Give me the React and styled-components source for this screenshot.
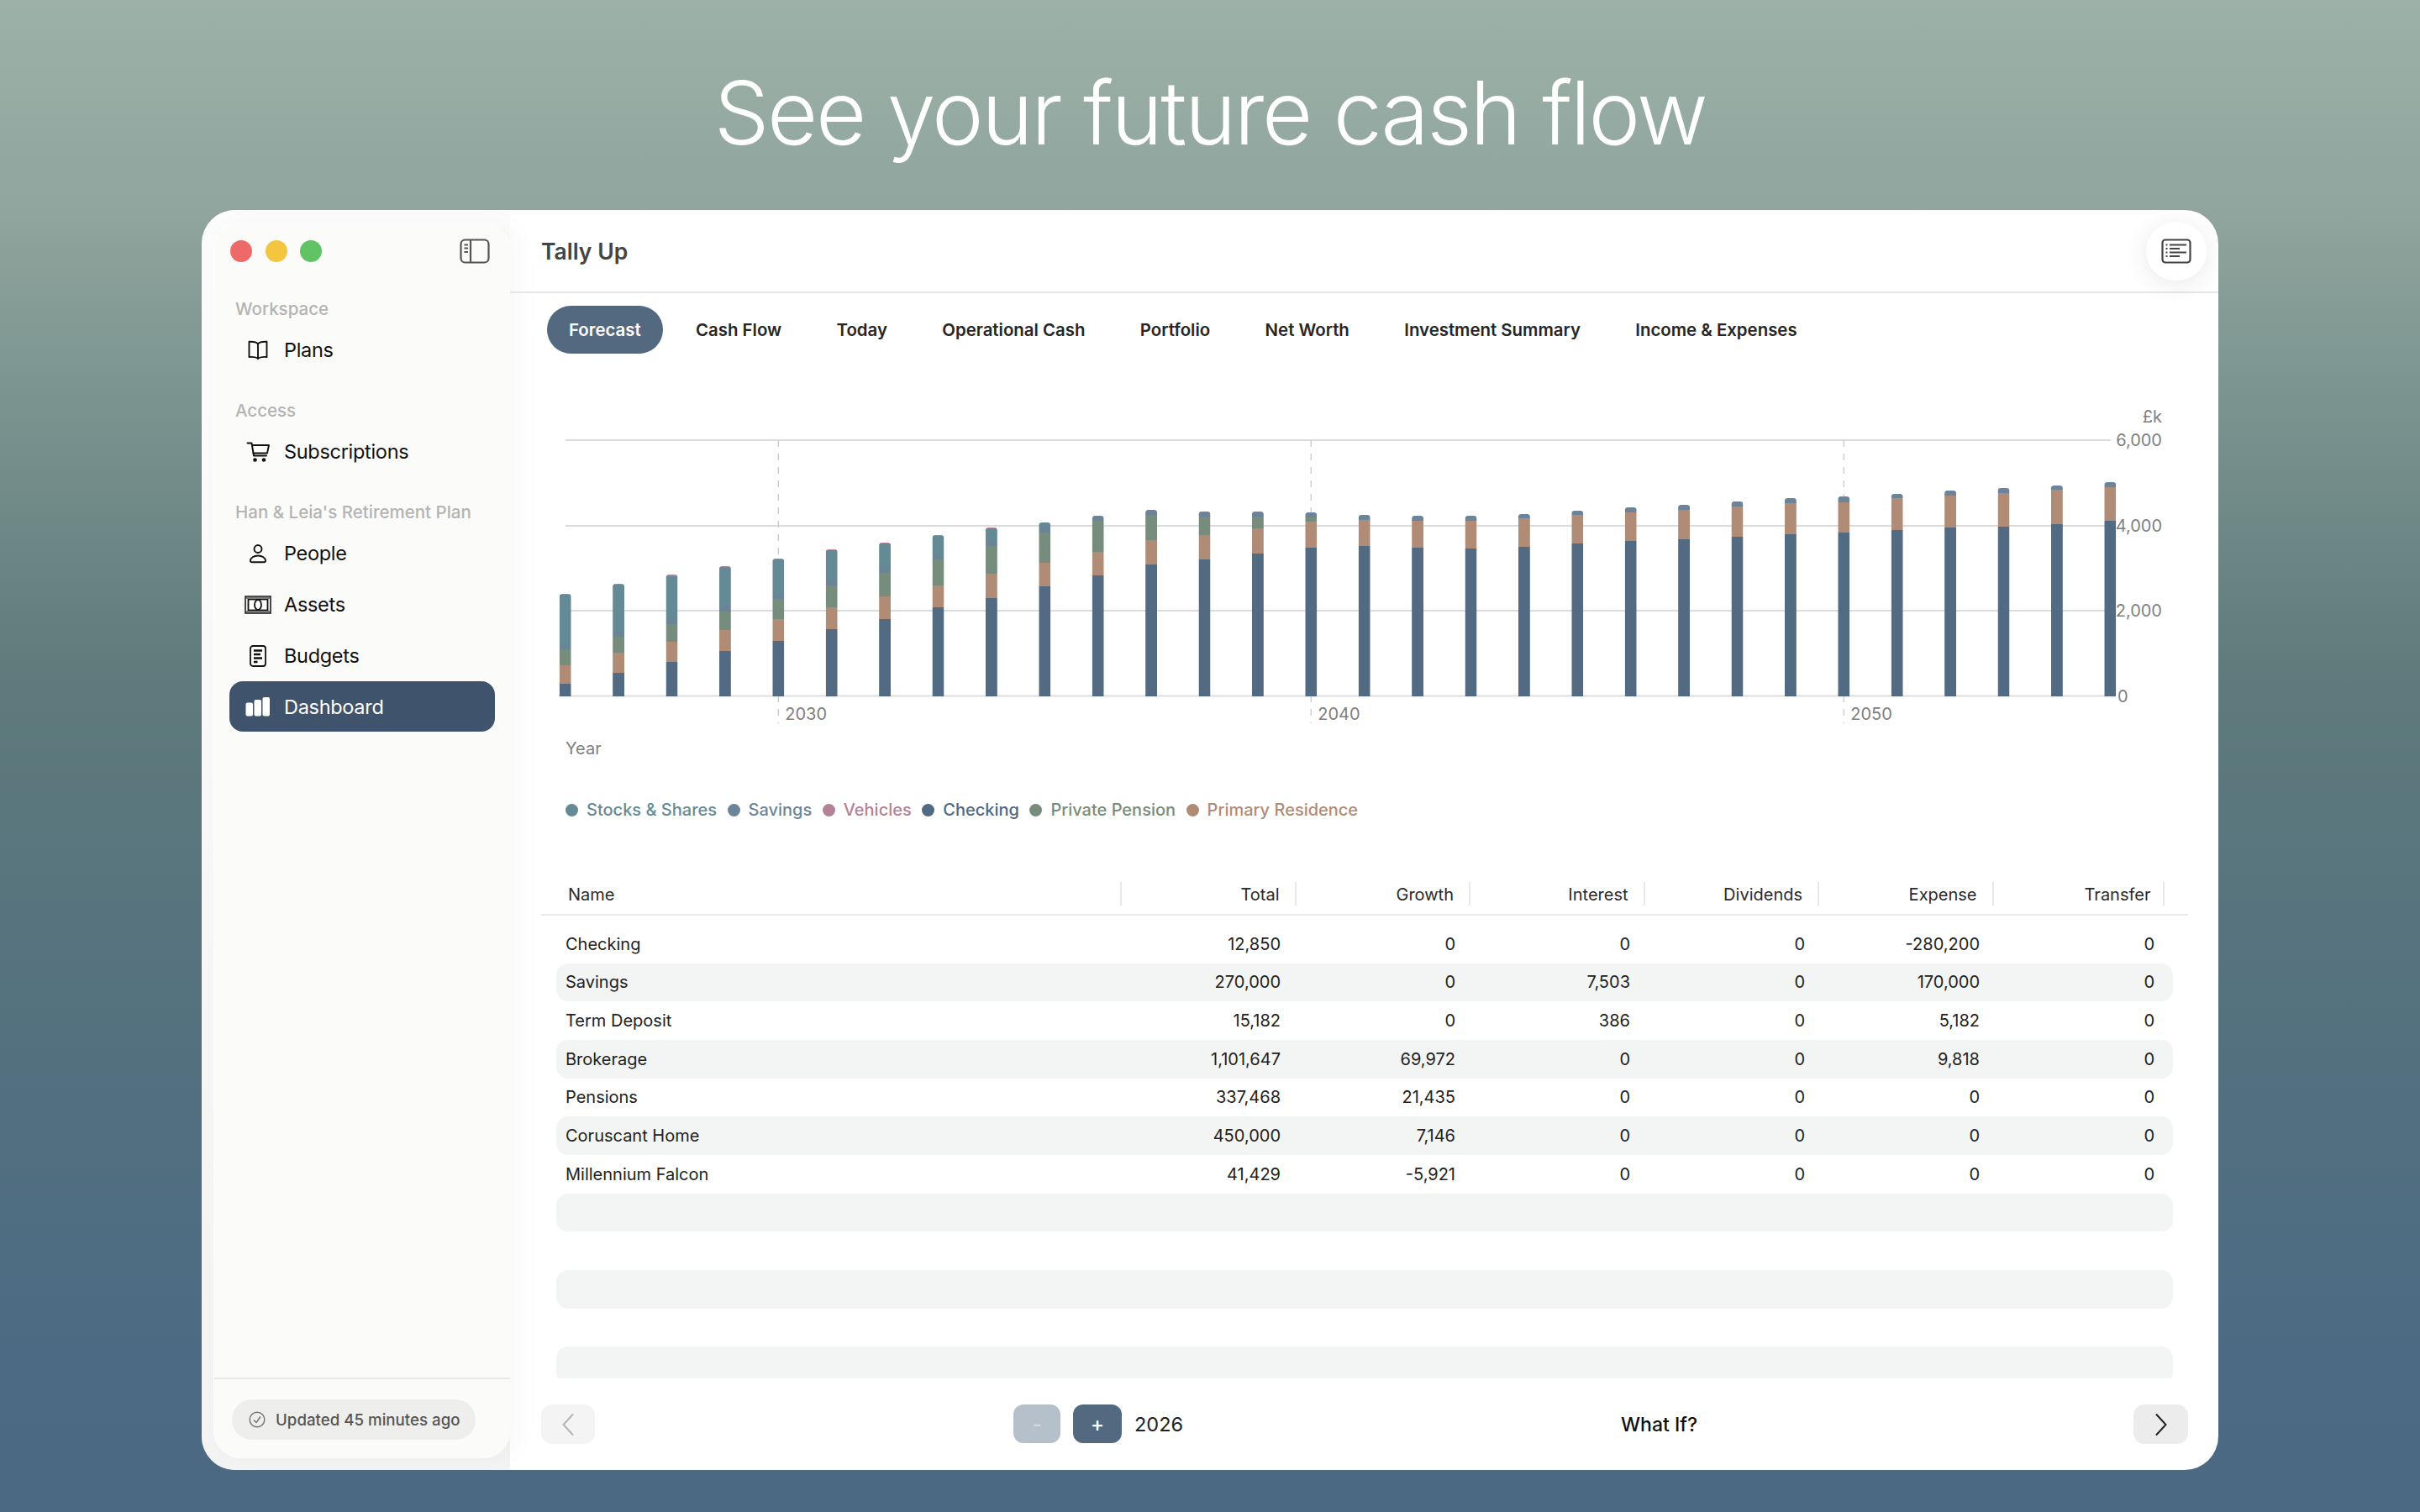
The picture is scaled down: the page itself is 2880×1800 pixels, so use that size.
import React from 'react'
import styled, { createGlobalStyle } from 'styled-components'

const GlobalStyle = createGlobalStyle`
  html, body {
    margin: 0;
    padding: 0;
  }
  body {
    width: 2880px;
    height: 1800px;
    overflow: hidden;
    font-family: Inter, 'Liberation Sans', sans-serif;
  }
`

const Page = styled.div`
  width: 2880px;
  height: 1800px;
  display: flex;
  flex-direction: column;
  align-items: center;
  background: linear-gradient(180deg, #9db1a8 0%, #8fa59d 14%, #5f7b7c 44%, #56737e 62%, #4c6a83 90%, #4b6982 100%);
`

const Headline = styled.h1`
  height: 250px;
  margin: 0;
  display: flex;
  align-items: center;
  padding-top: 18px;
  box-sizing: border-box;
  font-size: 104px;
  font-weight: 300;
  letter-spacing: -2.4px;
  color: #fff;
`

const Window = styled.div`
  width: 2400px;
  height: 1500px;
  display: flex;
  background: #fff;
  border-radius: 40px;
  overflow: hidden;
  box-shadow: inset 1px 0 1px rgba(90, 90, 90, 0.25);
`

const SidebarWell = styled.div`
  width: 367px;
  flex: none;
  padding: 15px 0 15px 15px;
  box-sizing: border-box;
  background: linear-gradient(180deg, #fcfcfc 0%, #f3f3f3 100%);
`

const Sidebar = styled.aside`
  height: 100%;
  display: flex;
  flex-direction: column;
  background: #fbfbfa;
  border-radius: 32px;
  box-shadow: 10px 0 30px rgba(0, 0, 0, 0.03), 0 0 0 1px #fff;
`

const SidebarTop = styled.div`
  height: 68px;
  display: flex;
  align-items: center;
  justify-content: space-between;
  padding: 0 24px 0 19px;
  flex: none;
`

const Lights = styled.div`
  display: flex;
  gap: 15.5px;
`

const Light = styled.span`
  width: 26px;
  height: 26px;
  border-radius: 50%;
  background: ${props => props.color};
`

const Nav = styled.nav`
  flex: 1;
  padding-top: 20px;
`

const Section = styled.div`
  margin-bottom: 28px;
`

const SectionLabel = styled.div`
  height: 28px;
  line-height: 29px;
  margin: 0 0 5px 25px;
  font-size: 20.5px;
  font-weight: 500;
  color: #b4b4b4;
  white-space: nowrap;
`

const NavItem = styled.div`
  height: 60px;
  margin: 0 18px 1px;
  padding: 1px 0 0 16px;
  box-sizing: border-box;
  display: flex;
  align-items: center;
  gap: 13px;
  border-radius: 16px;
  font-size: 23.5px;
  letter-spacing: -0.3px;
  color: ${props => (props.$active ? '#fff' : '#111')};
  background: ${props => (props.$active ? '#3f546c' : 'transparent')};
`

const NavIcon = styled.span`
  width: 36px;
  height: 36px;
  display: flex;
  align-items: center;
  justify-content: center;
  flex: none;
`

const SidebarFooter = styled.div`
  height: 95px;
  flex: none;
  padding: 24px 0 0 21px;
  box-sizing: border-box;
  border-top: 2px solid #e7e7e6;
`

const StatusPill = styled.div`
  width: 290px;
  height: 48px;
  padding-left: 20px;
  box-sizing: border-box;
  display: flex;
  align-items: center;
  gap: 12px;
  border-radius: 24px;
  background: #eeeeed;
  font-size: 18.7px;
  font-weight: 500;
  color: #555;
  white-space: nowrap;
`

const Main = styled.main`
  flex: 1;
  min-width: 0;
  display: flex;
  flex-direction: column;
`

const TopBar = styled.header`
  height: 99px;
  flex: none;
  box-sizing: border-box;
  padding: 0 14px 0 37px;
  display: flex;
  align-items: center;
  justify-content: space-between;
  border-bottom: 2px solid #e6e6e6;
`

const AppTitle = styled.div`
  font-size: 26.5px;
  font-weight: 600;
  color: #444;
  padding-top: 1px;
`

const RoundButton = styled.div`
  width: 72px;
  height: 70px;
  display: flex;
  align-items: center;
  justify-content: center;
  border-radius: 36px;
  background: #fff;
  box-shadow: 0 4px 30px rgba(0, 0, 0, 0.09);
`

const Tabs = styled.div`
  flex: none;
  display: flex;
  gap: 13.4px;
  margin: 15px 0 0 44px;
`

const Tab = styled.div`
  height: 57px;
  padding: 0 26px;
  display: flex;
  align-items: center;
  border-radius: 29px;
  font-size: 20.4px;
  font-weight: 600;
  color: ${props => (props.$active ? '#fff' : '#262626')};
  background: ${props => (props.$active ? '#52697f' : 'transparent')};
`

const ChartSvg = styled.svg`
  display: block;
  flex: none;
  margin-top: 52px;
  font-family: Inter, 'Liberation Sans', sans-serif;
`

const Legend = styled.div`
  flex: none;
  height: 28px;
  margin: 40px 0 0 66px;
  display: flex;
  align-items: center;
  gap: 12.5px;
`

const LegendItem = styled.div`
  display: flex;
  align-items: center;
  gap: 10px;
  font-size: 20px;
  font-weight: 500;
  color: ${props => props.color};
`

const Dot = styled.span`
  width: 15px;
  height: 15px;
  border-radius: 50%;
  background: ${props => props.color};
`

const TableWrap = styled.div`
  flex: 1;
  min-height: 0;
  overflow: hidden;
  margin: 72px 36px 0 37px;
`

const HeadRow = styled.div`
  height: 40px;
  box-sizing: border-box;
  display: flex;
  padding-bottom: 10px;
  border-bottom: 2px solid #e8e8e8;
  margin-bottom: 11px;
`

const HeadName = styled.div`
  width: 691px;
  flex: none;
  padding-left: 32px;
  box-sizing: border-box;
  font-size: 20px;
  line-height: 30px;
  color: #2a2a2a;
  border-right: 2px solid #e8e8e8;
`

const HeadCell = styled.div`
  width: ${props => props.$width || 207.5}px;
  flex: none;
  padding-right: ${props => props.$pad || 18}px;
  box-sizing: border-box;
  text-align: right;
  font-size: 20px;
  line-height: 30px;
  color: #2a2a2a;
  border-right: 2px solid #e8e8e8;
`

const Row = styled.div`
  height: 45.67px;
  width: 1924px;
  margin-left: 18px;
  padding: 0 22px 0 11px;
  box-sizing: border-box;
  display: flex;
  align-items: center;
  border-radius: 14px;
  font-size: 20px;
  color: #222;
  background: ${props => (props.$shaded ? '#f3f5f4' : 'transparent')};
`

const RowName = styled.div`
  flex: 1;
`

const RowCell = styled.div`
  width: 208px;
  flex: none;
  text-align: right;
`

const BottomBar = styled.footer`
  height: 109px;
  flex: none;
  box-sizing: border-box;
  padding: 31px 36px 0 37px;
  display: grid;
  grid-template-columns: 562px 723px 1fr 65px;
  align-items: start;
`

const NavButton = styled.div`
  width: ${props => props.$width}px;
  height: 47px;
  display: flex;
  align-items: center;
  justify-content: center;
  border-radius: 13px;
  background: ${props => props.$bg};
`

const Stepper = styled.div`
  display: flex;
  align-items: center;
  gap: 15px;
`

const StepButton = styled.div`
  width: ${props => props.$width}px;
  height: 46px;
  display: flex;
  align-items: center;
  justify-content: center;
  border-radius: 12px;
  font-size: 24px;
  font-weight: 500;
  color: ${props => (props.$muted ? '#d5dbe1' : '#fff')};
  background: ${props => (props.$muted ? '#b5c0cb' : '#52697f')};
`

const YearValue = styled.div`
  font-size: 23.5px;
  color: #222;
`

const WhatIf = styled.div`
  height: 47px;
  display: flex;
  align-items: center;
  font-size: 23px;
  font-weight: 500;
  color: #111;
`

const PALETTE = {
  checking: '#526a82',
  residence: '#b08c76',
  pension: '#768d7e',
  savings: '#6b8499',
  stocks: '#648b95',
  vehicles: '#b58295',
}

// cumulative pixel heights read off the picture: checking, residence, pension, savings, stocks, vehicles
const BARS = [
  [15, 37, 56, 61, 121, 122],
  [28, 52, 71, 77, 133, 134],
  [41, 65, 86, 92, 143, 145],
  [54, 79, 101, 107, 154, 155],
  [66, 92, 116, 122, 163, 164],
  [80, 106, 132, 138, 174, 175],
  [92, 119, 147, 153, 182, 183],
  [106, 132, 163, 170, 191, 192],
  [117, 146, 179, 185, 200, 201],
  [131, 159, 195, 201, 207, 207],
  [144, 172, 209, 215, 215, 215],
  [157, 186, 216, 222, 222, 222],
  [163, 192, 214, 220, 220, 220],
  [170, 200, 214, 220, 220, 220],
  [177, 208, 213, 219, 219, 219],
  [179, 210, 210, 216, 216, 216],
  [177, 209, 209, 215, 215, 215],
  [176, 209, 209, 215, 215, 215],
  [178, 212, 212, 217, 217, 217],
  [182, 216, 216, 221, 221, 221],
  [185, 219, 219, 225, 225, 225],
  [187, 222, 222, 228, 228, 228],
  [190, 226, 226, 232, 232, 232],
  [193, 230, 230, 236, 236, 236],
  [195, 231, 231, 238, 238, 238],
  [198, 236, 236, 241, 241, 241],
  [201, 239, 239, 245, 245, 245],
  [202, 242, 242, 248, 248, 248],
  [205, 246, 246, 251, 251, 251],
  [209, 249, 249, 255, 255, 255],
]

const SEGMENTS = ['checking', 'residence', 'pension', 'savings', 'stocks', 'vehicles']

// chart coordinates are relative to the svg, which starts at x=607 y=473 on the page
const CHART_W = 2033
const CHART_H = 437
const axisY = 355.5
const barBase = 356
const barX = i => 65.7 + i * 63.4
const BAR_W = 14

const Chart = () => {
  const grid = [
    { y: 51, label: '6,000' },
    { y: 153, label: '4,000' },
    { y: 254, label: '2,000' },
  ]
  const years = [
    { i: 4, label: '2030' },
    { i: 14, label: '2040' },
    { i: 24, label: '2050' },
  ]
  return (
    <ChartSvg width={CHART_W} height={CHART_H} viewBox={`0 0 ${CHART_W} ${CHART_H}`}>
      <defs>
        {BARS.map((bar, i) => (
          <clipPath key={i} id={`bar-${i}`}>
            <rect x={barX(i) - BAR_W / 2} y={barBase - bar[5]} width={BAR_W} height={bar[5] + 6} rx="3.5" />
          </clipPath>
        ))}
      </defs>
      {grid.map(g => (
        <g key={g.y}>
          <line x1="66" x2="1905" y1={g.y} y2={g.y} stroke="#dcdcdc" strokeWidth="2" />
          <text x="1966" y={g.y + 7} textAnchor="end" fontSize="20" fill="#808080">{g.label}</text>
        </g>
      ))}
      <line x1="58" x2="1911" y1={axisY} y2={axisY} stroke="#dedede" strokeWidth="2" />
      <text x="1966" y="30" textAnchor="end" fontSize="20" fill="#808080">£k</text>
      <text x="1913" y={axisY + 7} fontSize="20" fill="#808080">0</text>
      {years.map(t => (
        <g key={t.label}>
          <line x1={barX(t.i)} x2={barX(t.i)} y1="51" y2="388" stroke="#cfcfcf" strokeWidth="1.5" strokeDasharray="8 8" />
          <text x={barX(t.i) + 8} y="384" fontSize="20" fill="#808080">{t.label}</text>
        </g>
      ))}
      {BARS.map((bar, i) => (
        <g key={i} clipPath={`url(#bar-${i})`}>
          {SEGMENTS.map((name, s) => {
            const from = s === 0 ? 0 : bar[s - 1]
            const h = bar[s] - from
            if (h <= 0) return null
            return <rect key={name} x={barX(i) - BAR_W / 2} y={barBase - bar[s]} width={BAR_W} height={h} fill={PALETTE[name]} />
          })}
        </g>
      ))}
      <text x="66" y="425" fontSize="20" fill="#808080">Year</text>
    </ChartSvg>
  )
}

const BookIcon = () => (
  <svg width="28" height="24" viewBox="0 0 28 24" fill="none" stroke="#111" strokeWidth="1.9" strokeLinejoin="round">
    <path d="M14 4.500C12.500 2.300 9.500 1.500 3.500 1.700V20c6-.4 8.800.2 10.500 2.200 1.700-2 4.500-2.600 10.500-2.200V1.700C18.500 1.500 15.500 2.300 14 4.500zM14 4.500V22" />
  </svg>
)

const CartIcon = () => (
  <svg width="28" height="24" viewBox="0 0 28 24" fill="none" stroke="#111" strokeWidth="1.9" strokeLinecap="round" strokeLinejoin="round">
    <path d="M1.500 1.500H6.500L9 16.500H24" />
    <path d="M7 4H27L25 13.500H8.500" />
    <circle cx="10.500" cy="21.500" r="1.400" fill="#111" />
    <circle cx="21" cy="21.500" r="1.400" fill="#111" />
  </svg>
)

const PersonIcon = () => (
  <svg width="24" height="24" viewBox="0 0 24 24" fill="none" stroke="#111" strokeWidth="1.9">
    <circle cx="12" cy="6.500" r="4.500" />
    <path d="M3 20.500c0-3.500 4-6 9-6s9 2.500 9 6c0 1-.5 1.800-2 1.800H5c-1.500 0-2-.8-2-1.800z" />
  </svg>
)

const BanknoteIcon = () => (
  <svg width="32" height="22" viewBox="0 0 32 22" fill="none" stroke="#111" strokeWidth="1.500">
    <rect x="1" y="1" width="30" height="20" />
    <rect x="4.500" y="4.500" width="23" height="13" strokeWidth="1.800" fill="#fff" />
    <rect x="1.800" y="1.800" width="28.400" height="2.200" fill="#777" stroke="none" />
    <rect x="1.800" y="18" width="28.400" height="2.200" fill="#777" stroke="none" />
    <ellipse cx="16" cy="11" rx="4" ry="6" strokeWidth="1.800" />
  </svg>
)

const BudgetIcon = () => (
  <svg width="20" height="26" viewBox="0 0 20 26" fill="none">
    <rect x="1" y="1" width="18" height="24" rx="3" stroke="#111" strokeWidth="1.800" />
    <path d="M5 6.500h10M5 11h8M5 15.500h10M5 20h4.500" stroke="#111" strokeWidth="2.600" />
  </svg>
)

const BarsIcon = () => (
  <svg width="30" height="23" viewBox="0 0 30 23" fill="#fff">
    <rect x="0.500" y="6.500" width="8.500" height="16" rx="2" />
    <rect x="10.500" y="3" width="8.500" height="19.500" rx="2" />
    <rect x="20.500" y="0" width="8.500" height="22.500" rx="2" />
  </svg>
)

const SidebarToggleIcon = () => (
  <svg width="36" height="30" viewBox="0 0 36 30" fill="none" stroke="#555" strokeWidth="2.200">
    <rect x="1.500" y="1.500" width="33" height="27" rx="5" />
    <path d="M13 1.500v27" />
    <path d="M5.500 7.500h4.500M5.500 11.500h4.500M5.500 16h4.500" strokeWidth="1.800" />
  </svg>
)

const InspectorIcon = () => (
  <svg width="36" height="30" viewBox="0 0 36 30" fill="none" stroke="#444" strokeWidth="2.200">
    <rect x="1.500" y="1.500" width="33" height="27" rx="3.500" />
    <path d="M10 7.500h20M10 12h12M10 16.500h20M10 21h12" strokeWidth="1.800" />
    <path d="M5.500 7.500h2M5.500 12h2M5.500 16.500h2M5.500 21h2" strokeWidth="1.800" />
  </svg>
)

const CheckCircleIcon = () => (
  <svg width="20" height="20" viewBox="0 0 20 20" fill="none" stroke="#777" strokeWidth="1.500">
    <circle cx="10" cy="10" r="8.800" />
    <path d="M6 10.500l3 3 5-7" strokeLinejoin="round" />
  </svg>
)

const Chevron = ({ color, left }) => (
  <svg width="16" height="28" viewBox="0 0 16 28" fill="none" stroke={color} strokeWidth="2">
    <path d={left ? 'M14 1.500L2.500 14 14 26.500' : 'M2 1.500L13.500 14 2 26.500'} />
  </svg>
)

const SECTIONS = [
  { label: 'Workspace', items: [{ name: 'Plans', icon: <BookIcon /> }] },
  { label: 'Access', items: [{ name: 'Subscriptions', icon: <CartIcon /> }] },
  {
    label: "Han & Leia's Retirement Plan",
    items: [
      { name: 'People', icon: <PersonIcon /> },
      { name: 'Assets', icon: <BanknoteIcon /> },
      { name: 'Budgets', icon: <BudgetIcon /> },
      { name: 'Dashboard', icon: <BarsIcon />, active: true },
    ],
  },
]

const TABS = ['Forecast', 'Cash Flow', 'Today', 'Operational Cash', 'Portfolio', 'Net Worth', 'Investment Summary', 'Income & Expenses']

const LEGEND = [
  { name: 'Stocks & Shares', color: '#648b95' },
  { name: 'Savings', color: '#6b8499' },
  { name: 'Vehicles', color: '#b58295' },
  { name: 'Checking', color: '#4f6884' },
  { name: 'Private Pension', color: '#768d7e' },
  { name: 'Primary Residence', color: '#b08c76' },
]

const COLUMNS = ['Total', 'Growth', 'Interest', 'Dividends', 'Expense']

const ROWS = [
  ['Checking', '12,850', '0', '0', '0', '-280,200', '0'],
  ['Savings', '270,000', '0', '7,503', '0', '170,000', '0'],
  ['Term Deposit', '15,182', '0', '386', '0', '5,182', '0'],
  ['Brokerage', '1,101,647', '69,972', '0', '0', '9,818', '0'],
  ['Pensions', '337,468', '21,435', '0', '0', '0', '0'],
  ['Coruscant Home', '450,000', '7,146', '0', '0', '0', '0'],
  ['Millennium Falcon', '41,429', '-5,921', '0', '0', '0', '0'],
  [],
  [],
  [],
  [],
  [],
]

const App = () => (
  <Page>
    <GlobalStyle />
    <Headline>See your future cash flow</Headline>
    <Window>
      <SidebarWell>
        <Sidebar>
          <SidebarTop>
            <Lights>
              <Light color="#ee6a68" />
              <Light color="#f4c640" />
              <Light color="#60c465" />
            </Lights>
            <SidebarToggleIcon />
          </SidebarTop>
          <Nav>
            {SECTIONS.map(section => (
              <Section key={section.label}>
                <SectionLabel>{section.label}</SectionLabel>
                {section.items.map(item => (
                  <NavItem key={item.name} $active={item.active}>
                    <NavIcon>{item.icon}</NavIcon>
                    {item.name}
                  </NavItem>
                ))}
              </Section>
            ))}
          </Nav>
          <SidebarFooter>
            <StatusPill>
              <CheckCircleIcon />
              Updated 45 minutes ago
            </StatusPill>
          </SidebarFooter>
        </Sidebar>
      </SidebarWell>
      <Main>
        <TopBar>
          <AppTitle>Tally Up</AppTitle>
          <RoundButton>
            <InspectorIcon />
          </RoundButton>
        </TopBar>
        <Tabs>
          {TABS.map((tab, i) => (
            <Tab key={tab} $active={i === 0}>{tab}</Tab>
          ))}
        </Tabs>
        <Chart />
        <Legend>
          {LEGEND.map(item => (
            <LegendItem key={item.name} color={item.color}>
              <Dot color={item.color} />
              {item.name}
            </LegendItem>
          ))}
        </Legend>
        <TableWrap>
          <HeadRow>
            <HeadName>Name</HeadName>
            {COLUMNS.map(col => (
              <HeadCell key={col}>{col}</HeadCell>
            ))}
            <HeadCell $width={203} $pad={14}>Transfer</HeadCell>
          </HeadRow>
          {ROWS.map((row, i) => (
            <Row key={i} $shaded={i % 2 === 1}>
              <RowName>{row[0]}</RowName>
              {row.slice(1).map((value, c) => (
                <RowCell key={c}>{value}</RowCell>
              ))}
            </Row>
          ))}
        </TableWrap>
        <BottomBar>
          <NavButton $width={64} $bg="#f4f4f4">
            <Chevron color="#b5b5b5" left />
          </NavButton>
          <Stepper>
            <StepButton $width={56} $muted>-</StepButton>
            <StepButton $width={58}>+</StepButton>
            <YearValue>2026</YearValue>
          </Stepper>
          <WhatIf>What If?</WhatIf>
          <NavButton $width={65} $bg="#ececec">
            <Chevron color="#222" />
          </NavButton>
        </BottomBar>
      </Main>
    </Window>
  </Page>
)

export default App
